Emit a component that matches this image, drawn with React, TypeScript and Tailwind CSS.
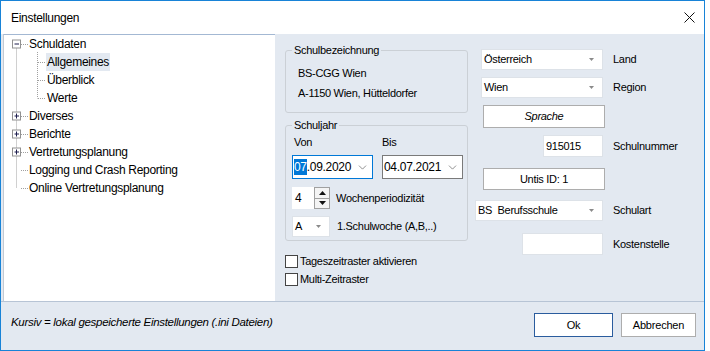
import { ChevronDown } from 'lucide-react'

const treeItems = [
  { label: 'Schuldaten', level: 0 },
  { label: 'Allgemeines', level: 1, selected: true },
  { label: 'Überblick', level: 1 },
  { label: 'Werte', level: 1 },
  { label: 'Diverses', level: 0 },
  { label: 'Berichte', level: 0 },
  { label: 'Vertretungsplanung', level: 0 },
  { label: 'Logging und Crash Reporting', level: 0 },
  { label: 'Online Vertretungsplanung', level: 0 },
]

// row centers in tree-local coords (row height 18)
const cy = (i: number) => i * 18 + 9.5

function TreeLines() {
  const boxes = [
    { row: 0, plus: false },
    { row: 4, plus: true },
    { row: 5, plus: true },
    { row: 6, plus: true },
  ]
  const topLevel = [0, 4, 5, 6, 7, 8]
  return (
    <svg className="absolute left-0 top-0" width="272" height="200">
      <g stroke="#a0a0a0" strokeDasharray="1 1">
        <line x1="12.5" y1={cy(0)} x2="12.5" y2={cy(8)} />
        <line x1="33.5" y1="17" x2="33.5" y2={cy(3)} />
        {topLevel.map((r) => (
          <line key={r} x1="17" y1={cy(r)} x2="24" y2={cy(r)} />
        ))}
        {[1, 2, 3].map((r) => (
          <line key={r} x1="34" y1={cy(r)} x2="42" y2={cy(r)} />
        ))}
      </g>
      {boxes.map((b) => (
        <g key={b.row}>
          <rect x="8.5" y={cy(b.row) - 4.5} width="8" height="8" fill="white" stroke="#919191" />
          <line x1="10.5" y1={cy(b.row) - 0.5} x2="15" y2={cy(b.row) - 0.5} stroke="#1d1d4d" />
          {b.plus && (
            <line x1="12.5" y1={cy(b.row) - 3} x2="12.5" y2={cy(b.row) + 2} stroke="#1d1d4d" />
          )}
        </g>
      ))}
    </svg>
  )
}

function Tree() {
  return (
    <div className="relative ml-[2px] w-[272px] bg-white border-t border-l border-t-[#a3b8d3] border-l-[#c3cad3]">
      <TreeLines />
      <div className="relative">
        {treeItems.map((item) => (
          <div key={item.label} className="h-[18px] flex items-center text-[12px]">
            {item.level === 0 ? (
              <span className="pl-[25px]">{item.label}</span>
            ) : (
              <span
                className={
                  'ml-[42px] px-[1px] leading-[18px] ' + (item.selected ? 'bg-[#e3e9f1]' : '')
                }
              >
                {item.label}
              </span>
            )}
          </div>
        ))}
      </div>
    </div>
  )
}

function SmallArrow() {
  return (
    <svg width="5" height="3" viewBox="0 0 5 3" className="shrink-0">
      <path d="M0 0 H5 L2.5 3 Z" fill="#8a8a8a" />
    </svg>
  )
}

function Combo({ value, width }: { value: string; width: string }) {
  return (
    <div className={`${width} h-full bg-white border border-[#dde2e8] flex items-center pl-[2px] pr-[8px]`}>
      <span className="flex-1 whitespace-pre">{value}</span>
      <SmallArrow />
    </div>
  )
}

function DateBox({ active, first, rest }: { active?: boolean; first: string; rest: string }) {
  return (
    <div
      className={
        'w-[81px] h-[24px] bg-white border flex items-center pl-[1px] pr-[3px] text-[12px] tracking-[-0.3px] ' +
        (active ? 'border-[#0078d7]' : 'border-[#7a7a7a]')
      }
    >
      <span className={active ? 'bg-[#0078d7] text-white leading-[16px]' : ''}>{first}</span>
      <span className="flex-1">{rest}</span>
      <ChevronDown size={13} strokeWidth={1.2} className="text-[#555]" />
    </div>
  )
}

function Checkbox({ label }: { label: string }) {
  return (
    <div className="h-[18px] flex items-center gap-[2px]">
      <div className="w-[13px] h-[13px] bg-white border border-[#444]" />
      <span>{label}</span>
    </div>
  )
}

function LeftColumn() {
  return (
    <div className="w-[183px] flex flex-col">
      <fieldset className="mt-[9px] h-[70px] border border-[#cbd0d6] rounded-[3px]">
        <legend className="ml-[6px] px-[2px] leading-[14px]">Schulbezeichnung</legend>
        <div className="pl-[12px] pt-[6px] leading-[20px]">
          <div>BS-CGG Wien</div>
          <div>A-1150 Wien, Hütteldorfer</div>
        </div>
      </fieldset>
      <fieldset className="mt-[5px] h-[123px] border border-[#cbd0d6] rounded-[3px]">
        <legend className="ml-[6px] px-[2px] leading-[14px]">Schuljahr</legend>
        <div className="pl-[6px]">
          <div className="flex h-[16px] mt-[2px] items-center">
            <span className="w-[90px] pl-[2px]">Von</span>
            <span>Bis</span>
          </div>
          <div className="flex gap-[9px] mt-[5px]">
            <DateBox active first="07" rest=".09.2020" />
            <DateBox first="04.07.2021" rest="" />
          </div>
          <div className="flex items-center mt-[8px] h-[22px]">
            <div className="w-[38px] h-[22px] bg-white flex">
              <span className="flex-1 pl-[3px] text-[12px] leading-[22px]">4</span>
              <div className="w-[16px] border border-[#a0a0a0] flex flex-col">
                <div className="flex-1 flex items-center justify-center border-b border-[#a0a0a0] bg-[#f4f4f4]">
                  <svg width="7" height="4"><path d="M0 4 H7 L3.5 0 Z" fill="#111" /></svg>
                </div>
                <div className="flex-1 flex items-center justify-center bg-[#f4f4f4]">
                  <svg width="7" height="4"><path d="M0 0 H7 L3.5 4 Z" fill="#111" /></svg>
                </div>
              </div>
            </div>
            <span className="ml-[6px]">Wochenperiodizität</span>
          </div>
          <div className="flex items-center mt-[7px] h-[21px]">
            <div className="w-[38px] h-[21px]">
              <Combo value="A" width="w-[38px]" />
            </div>
            <span className="ml-[7px]">1.Schulwoche (A,B,..)</span>
          </div>
        </div>
      </fieldset>
      <div className="mt-[11px]">
        <Checkbox label="Tageszeitraster aktivieren" />
        <Checkbox label="Multi-Zeitraster" />
      </div>
    </div>
  )
}

function Row({ mt, h, label, children }: { mt: string; h: string; label?: string; children: React.ReactNode }) {
  return (
    <div className={`${mt} ${h} flex items-center`}>
      <div className="w-[130px] h-full flex justify-end">{children}</div>
      {label && <span className="ml-[8px]">{label}</span>}
    </div>
  )
}

function TextBox({ value, width }: { value: string; width: string }) {
  return (
    <div className={`${width} h-full mr-[2px] bg-white border border-[#dde2e8] flex items-center pl-[2px]`}>
      {value}
    </div>
  )
}

function Button({ label, italic }: { label: string; italic?: boolean }) {
  return (
    <div
      className={
        'w-[122px] h-full bg-white border border-[#adadad] flex items-center justify-center ' +
        (italic ? 'italic' : '')
      }
    >
      {label}
    </div>
  )
}

function RightColumn() {
  return (
    <div className="ml-[7px] flex flex-col">
      <Row mt="mt-[15px]" h="h-[21px]" label="Land">
        <div className="mr-[2px] h-full"><Combo value="Österreich" width="w-[122px]" /></div>
      </Row>
      <Row mt="mt-[7px]" h="h-[21px]" label="Region">
        <div className="mr-[2px] h-full"><Combo value="Wien" width="w-[122px]" /></div>
      </Row>
      <Row mt="mt-[7px]" h="h-[23px]">
        <Button label="Sprache" italic />
      </Row>
      <Row mt="mt-[7px]" h="h-[22px]" label="Schulnummer">
        <TextBox value="915015" width="w-[60px]" />
      </Row>
      <Row mt="mt-[11px]" h="h-[22px]">
        <Button label="Untis ID: 1" />
      </Row>
      <Row mt="mt-[10px]" h="h-[21px]" label="Schulart">
        <div className="mr-[2px] h-full"><Combo value="BS  Berufsschule" width="w-[128px]" /></div>
      </Row>
      <Row mt="mt-[12px]" h="h-[22px]" label="Kostenstelle">
        <TextBox value="" width="w-[81px]" />
      </Row>
    </div>
  )
}

export default function App() {
  return (
    <div className="w-[710px] h-[351px] bg-white font-['Liberation_Sans',Arial,sans-serif] text-black">
      <div className="w-[705px] h-[351px] border border-[#1883d7] flex flex-col">
        <div className="h-[33px] shrink-0 bg-white flex items-center pl-[10px] pr-[9px]">
          <span className="flex-1 text-[12px] tracking-[-0.3px]">Einstellungen</span>
          <svg width="11" height="11" viewBox="0 0 11 11">
            <path d="M0.5 0.5 L10.5 10.5 M10.5 0.5 L0.5 10.5" stroke="#111" strokeWidth="1" />
          </svg>
        </div>
        <div className="h-[267px] shrink-0 flex bg-[#e3e9f1] text-[11px] tracking-[-0.3px]">
          <Tree />
          <div className="flex-1 flex pl-[10px]">
            <LeftColumn />
            <RightColumn />
          </div>
        </div>
        <div className="flex-1 bg-[#e3e9f1] border-t border-[#b7c4d5] flex items-start pt-[11px] pl-[10px] pr-[8px]">
          <span className="flex-1 italic text-[11.5px] tracking-[-0.3px] mt-[1px]">
            Kursiv = lokal gespeicherte Einstellungen (.ini Dateien)
          </span>
          <div className="w-[79px] h-[24px] bg-white border border-[#2a5c9e] flex items-center justify-center text-[11px] tracking-[-0.2px]">
            Ok
          </div>
          <div className="ml-[8px] w-[75px] h-[24px] bg-white border border-[#adadad] flex items-center justify-center text-[11px] tracking-[-0.2px]">
            Abbrechen
          </div>
        </div>
      </div>
    </div>
  )
}
